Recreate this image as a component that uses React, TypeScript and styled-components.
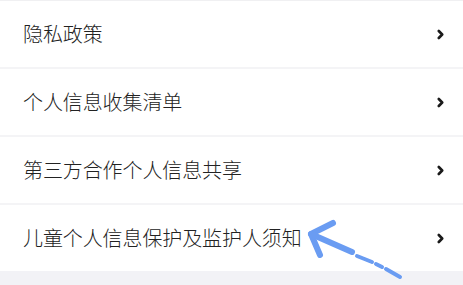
import React from 'react';
import styled, { createGlobalStyle } from 'styled-components';

const GlobalStyle = createGlobalStyle`
  html, body {
    margin: 0;
    padding: 0;
    background: #f2f2f6;
  }
  body {
    font-family: "Noto Sans CJK SC", "Noto Sans", sans-serif;
  }
`;

const Page = styled.div`
  position: relative;
  width: 463px;
  height: 285px;
  overflow: hidden;
  background: #f2f2f6;
`;

const List = styled.ul`
  list-style: none;
  margin: 0;
  padding: 0;
  border-top: 1px solid #f0f0f2;
  background: #ffffff;
`;

const Row = styled.li<{ $last?: boolean }>`
  display: flex;
  align-items: center;
  justify-content: space-between;
  height: 66px;
  padding: 0 19px 0 23px;
  border-bottom: ${({ $last }) => ($last ? 'none' : '2px solid #f4f4f6')};
`;

const Label = styled.span`
  font-size: 20px;
  font-weight: 300;
  line-height: 1;
  color: #222222;
  letter-spacing: -0.1px;
`;

const Chevron = styled.svg`
  width: 7px;
  height: 11px;
  flex: none;
`;

const Annotation = styled.svg`
  position: absolute;
  left: 0;
  top: 0;
  pointer-events: none;
`;

const items = ['隐私政策', '个人信息收集清单', '第三方合作个人信息共享', '儿童个人信息保护及监护人须知'];

const App = () => (
  <>
    <GlobalStyle />
    <Page>
      <List>
        {items.map((text, i) => (
          <Row key={text} $last={i === items.length - 1}>
            <Label>{text}</Label>
            <Chevron viewBox="0 0 7 11">
              <path d="M1.8 2 L5.2 5.5 L1.8 9" fill="none" stroke="#1a1a1a" strokeWidth="2.6" strokeLinecap="round" strokeLinejoin="round" />
            </Chevron>
          </Row>
        ))}
      </List>
      <Annotation width="463" height="285" viewBox="0 0 463 285">
        <g fill="none" stroke="#6a9cf2" strokeLinecap="round" strokeLinejoin="round">
          <path d="M333 223 L311 234 L320 255" strokeWidth="6" />
          <path d="M311 234 L352 252" strokeWidth="6" />
          <path d="M357 256 L372 262 M376 264 L382 267 M386 269 L400 277" strokeWidth="4" />
        </g>
      </Annotation>
    </Page>
  </>
);

export default App;
